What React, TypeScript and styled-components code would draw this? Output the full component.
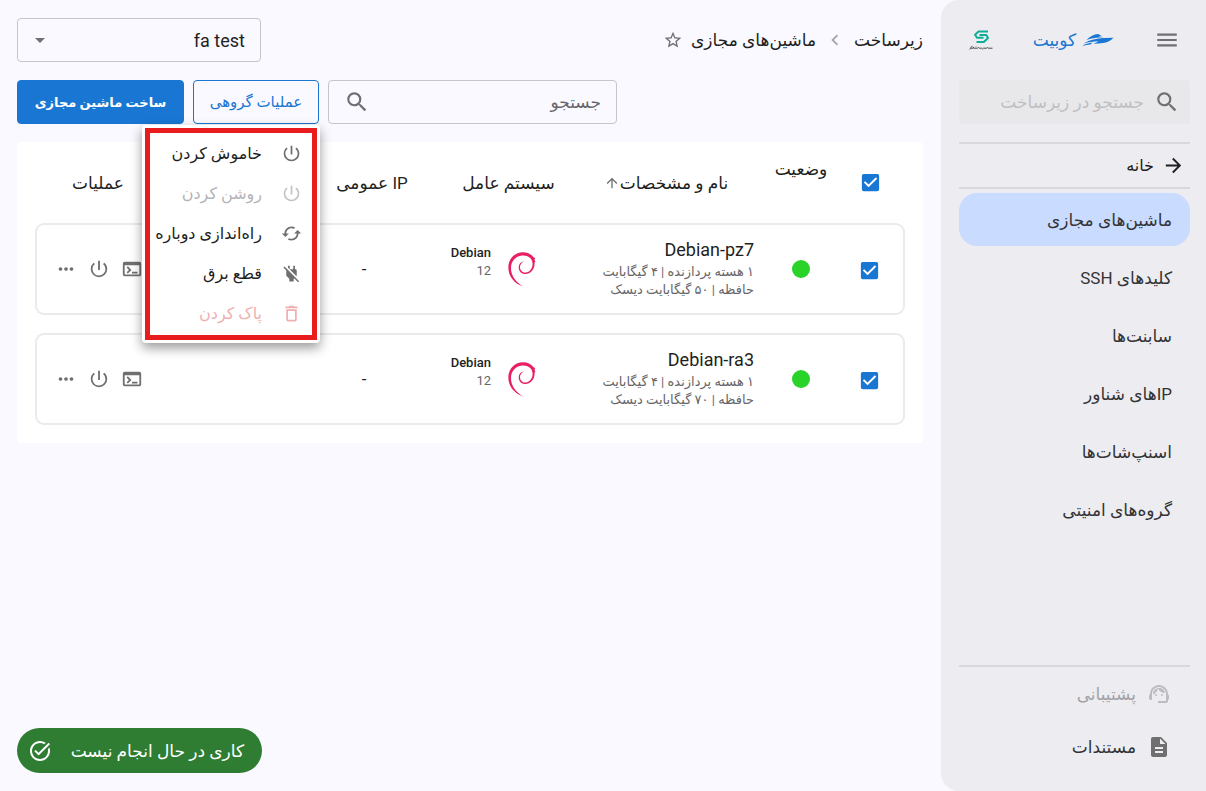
import React, { useState } from "react";
import styled, { createGlobalStyle, css } from "styled-components";
import {
  MdArrowDropDown,
  MdArrowForward,
  MdArrowUpward,
  MdCached,
  MdCheckBox,
  MdCheckBoxOutlineBlank,
  MdChevronLeft,
  MdDescription,
  MdMenu,
  MdMoreHoriz,
  MdOutlineDeleteOutline,
  MdOutlineTerminal,
  MdPowerOff,
  MdPowerSettingsNew,
  MdSearch,
  MdStarBorder,
  MdSupportAgent,
  MdTaskAlt,
} from "react-icons/md";

const fontStack = `Roboto, "DejaVu Sans", sans-serif`;

const colors = {
  page: "#faf9ff",
  side: "#edecf1",
  line: "#d9d9dd",
  text: "#1f1f22",
  soft: "#666669",
  icon: "#6f6f72",
  faded: "#b4b4b8",
  blue: "#1976d2",
  active: "#c9dbff",
};

const GlobalStyle = createGlobalStyle`
  *, *::before, *::after { box-sizing: border-box; }
  body { margin: 0; background: ${colors.page}; color: ${colors.text}; font-family: ${fontStack}; font-size: 17px; line-height: 24px; }
  button, input, select { font-family: inherit; color: inherit; }
  svg { display: block; flex: none; }
`;

const Page = styled.div`
  display: flex;
  min-height: 100vh;
`;

/* Sidebar */
const Sidebar = styled.aside`
  flex: none;
  width: 265px;
  display: flex;
  flex-direction: column;
  padding: 18px 16px 18px 18px;
  background: ${colors.side};
  border-radius: 18px 0 0 18px;
`;

const SideHeader = styled.div`
  display: flex;
  align-items: center;
  justify-content: space-between;
  height: 44px;
  padding: 0 10px;
  margin-bottom: 18px;
`;

const IconButton = styled.button`
  display: grid;
  place-items: center;
  padding: 0;
  border: 0;
  background: none;
  color: ${colors.icon};
  cursor: pointer;
`;

const Brand = styled.a`
  display: flex;
  align-items: center;
  gap: 6px;
  color: ${colors.blue};
  text-decoration: none;
`;

const SideSearch = styled.label`
  display: flex;
  align-items: center;
  gap: 10px;
  height: 44px;
  padding: 0 10px;
  margin-bottom: 18px;
  border-radius: 4px;
  background: #e8e8ea;
  color: ${colors.icon};
`;

const PlainInput = styled.input<{ $faint?: boolean }>`
  flex: 1;
  width: 100%;
  min-width: 0;
  padding: 0;
  border: 0;
  outline: 0;
  background: none;
  font-size: 17px;
  &::placeholder {
    color: ${(p) => (p.$faint ? "#bfbfc2" : colors.soft)};
    opacity: 1;
  }
`;

const HomeLink = styled.a`
  display: flex;
  align-items: center;
  gap: 8px;
  height: 47px;
  padding: 0 5px;
  margin-bottom: 4px;
  border: solid ${colors.line};
  border-width: 2px 0;
  color: ${colors.text};
  font-size: 16px;
  text-decoration: none;
`;

const Nav = styled.nav`
  display: flex;
  flex-direction: column;
  gap: 5px;
`;

const NavLink = styled.a<{ $active?: boolean }>`
  display: flex;
  align-items: center;
  height: 53px;
  padding: 0 18px;
  border-radius: 18px;
  background: ${(p) => (p.$active ? colors.active : "transparent")};
  color: #343437;
  text-decoration: none;
`;

const SideFooter = styled.div`
  display: flex;
  flex-direction: column;
  margin-top: auto;
  border-top: 2px solid ${colors.line};
`;

const FooterLink = styled.a<{ $disabled?: boolean }>`
  display: flex;
  align-items: center;
  gap: 11px;
  height: 53px;
  padding: 0 19px;
  color: ${(p) => (p.$disabled ? "#a2a2a6" : "#343437")};
  text-decoration: none;
  svg {
    color: ${(p) => (p.$disabled ? "#bcbcc0" : colors.icon)};
  }
`;

/* Main */
const Main = styled.main`
  flex: 1;
  min-width: 0;
  display: flex;
  flex-direction: column;
  padding: 18px 18px 18px 17px;
`;

const Bar = styled.div`
  display: flex;
  align-items: center;
  justify-content: space-between;
  height: 44px;
  margin-bottom: 18px;
`;

const Crumbs = styled.nav`
  display: flex;
  align-items: center;
  gap: 8px;
  a {
    color: inherit;
    text-decoration: none;
  }
`;

const SelectBox = styled.div`
  display: grid;
  align-items: center;
  width: 244px;
  color: ${colors.icon};
  > * {
    grid-area: 1 / 1;
  }
  > svg {
    justify-self: end;
    margin-left: 11px;
    pointer-events: none;
  }
`;

const Select = styled.select`
  appearance: none;
  width: 100%;
  height: 44px;
  padding: 0 15px;
  border: 1px solid #c6c6ca;
  border-radius: 4px;
  background: none;
  color: ${colors.text};
  font-size: 18px;
  direction: rtl;
`;

const Tools = styled.div`
  display: flex;
  justify-content: flex-end;
  gap: 9px;
  margin-bottom: 18px;
`;

const SearchBox = styled.label`
  display: flex;
  align-items: center;
  width: 289px;
  height: 44px;
  padding: 0 15px;
  border: 1px solid #c6c6ca;
  border-radius: 4px;
  color: ${colors.icon};
`;

const Button = styled.button<{ $filled?: boolean }>`
  width: ${(p) => (p.$filled ? "167px" : "126px")};
  height: 44px;
  padding: 0;
  border: 1px solid ${colors.blue};
  border-radius: 4px;
  background: ${(p) => (p.$filled ? colors.blue : "transparent")};
  color: ${(p) => (p.$filled ? "#fff" : colors.blue)};
  font-size: ${(p) => (p.$filled ? "13px" : "15px")};
  font-weight: ${(p) => (p.$filled ? 700 : 400)};
  white-space: nowrap;
`;

const MenuAnchor = styled.div`
  position: relative;
`;

const Menu = styled.div`
  position: absolute;
  top: 45px;
  right: -1px;
  z-index: 1;
  width: 178px;
  padding: 3px;
  border-radius: 4px;
  background: #fff;
  box-shadow: 0 5px 12px rgba(0, 0, 0, 0.4);
`;

const MenuList = styled.div`
  display: flex;
  flex-direction: column;
  padding-bottom: 2px;
  border: 5px solid #e81c1c;
`;

const menuTone = {
  normal: css`
    color: ${colors.text};
    svg {
      color: ${colors.icon};
    }
  `,
  disabled: css`
    color: ${colors.faded};
    svg {
      color: #c4c4c6;
    }
  `,
  danger: css`
    color: #efb0b2;
  `,
};

const MenuItem = styled.button<{ $tone: keyof typeof menuTone }>`
  display: flex;
  align-items: center;
  gap: 19px;
  height: 40px;
  padding: 0 10px;
  border: 0;
  background: none;
  font-size: 16px;
  white-space: nowrap;
  ${(p) => menuTone[p.$tone]}
`;

/* Table */
const Panel = styled.section`
  padding: 0 18px;
  border-radius: 4px;
  background: #fff;
`;

const Table = styled.table`
  width: 100%;
  table-layout: fixed;
  border-collapse: separate;
  border-spacing: 0 18px;
`;

const Col = styled.col<{ $w?: number }>`
  width: ${(p) => (p.$w ? `${p.$w}px` : "auto")};
`;

const HeadCell = styled.th<{ $top?: boolean; $end?: boolean; $inset?: boolean }>`
  height: 45px;
  padding: 0;
  padding-left: ${(p) => (p.$end ? "37px" : "0")};
  padding-right: ${(p) => (p.$inset ? "13px" : "0")};
  font-weight: 400;
  line-height: 18px;
  text-align: ${(p) => (p.$end ? "left" : "center")};
  vertical-align: ${(p) => (p.$top ? "top" : "middle")};
  white-space: nowrap;
`;

const SortButton = styled.button`
  display: inline-flex;
  align-items: center;
  padding: 0;
  border: 0;
  background: none;
  font-size: 17px;
  svg {
    color: ${colors.icon};
  }
`;

const Cell = styled.td<{ $inset?: boolean }>`
  height: 92px;
  padding: 0;
  padding-right: ${(p) => (p.$inset ? "16px" : "0")};
  border: solid #ebebec;
  border-width: 2px 0;
  text-align: center;
  &:first-child {
    border-right-width: 2px;
    border-radius: 0 9px 9px 0;
  }
  &:last-child {
    border-left-width: 2px;
    border-radius: 9px 0 0 9px;
  }
`;

const CheckLabel = styled.label`
  display: inline-grid;
  vertical-align: middle;
  color: ${colors.blue};
  > * {
    grid-area: 1 / 1;
  }
`;

const CheckInput = styled.input`
  appearance: none;
  margin: 0;
`;

const StatusDot = styled.span`
  display: block;
  width: 18px;
  height: 18px;
  margin: 0 auto;
  border-radius: 50%;
  background: #29d329;
`;

const NameBlock = styled.div`
  padding: 0 13px 4px 0;
  text-align: right;
  font-size: 13px;
  line-height: 18px;
  color: ${colors.soft};
  white-space: nowrap;
`;

const MachineName = styled.div`
  font-size: 18px;
  line-height: 27px;
  color: ${colors.text};
`;

const OsBlock = styled.div`
  display: flex;
  align-items: center;
  gap: 17px;
  padding-right: 42px;
`;

const OsText = styled.div`
  padding-bottom: 14px;
  font-size: 13px;
  line-height: 18px;
  text-align: right;
  color: ${colors.soft};
  strong {
    display: block;
    font-weight: 500;
    color: ${colors.text};
  }
`;

const Actions = styled.div`
  display: flex;
  justify-content: flex-end;
  gap: 11px;
  padding-left: 18px;
`;

const Status = styled.div`
  display: flex;
  align-items: center;
  align-self: flex-end;
  justify-content: space-between;
  width: 245px;
  height: 45px;
  padding: 0 18px 0 11px;
  margin-top: auto;
  border-radius: 23px;
  background: #2e7d32;
  color: #fff;
`;

function ShipLogo() {
  return (
    <svg width="32" height="14" viewBox="0 0 32 14" fill={colors.blue} aria-hidden="true">
      <path d="M4.500 7C8 3.500 12 1 16 1l3.500 1.800-3 .5 5 .9C15.500 4.200 9.500 5 4.500 7z" />
      <path d="M1.500 10.500C8 6.500 15 5.600 22 5l9.500-.3c-3 3.300-7.500 5.300-12.500 5.600-3 .2-5 .3-7.500.6l5-2.600c-5.500.4-10 .8-15 2.200z" />
      <path d="M.5 13c1-1.200 3-2.200 10-3.500L8.500 11.500C5.500 11.900 3 12.200.5 13z" />
    </svg>
  );
}

function CompanyLogo() {
  return (
    <svg width="24" height="20" viewBox="0 0 24 20" fill="none" aria-hidden="true">
      <g stroke="#10ad98" strokeWidth="2" strokeLinejoin="round">
        <path d="M19 1.500H9.500L6 4.800 8 7.800h6.500" />
        <path d="M10.500 5h6.800L19 8l-4.200 4H7.500" />
      </g>
      <path
        d="M23.500 18.200h-4l-1-.6-1 .6h-3l-1 .8-1-.8h-2l-1-.7-1 .7H5M4.500 17v1.200H1.500L.7 19.500M3.500 16.200l-2 1.300M7 16.500v.5"
        stroke="#4a4a4c"
      />
    </svg>
  );
}

function DebianLogo() {
  return (
    <svg width="28" height="35" viewBox="0 0 28 35" fill="#e91e63" aria-hidden="true">
      <path d="M15.500 34.500C6 31.500 0 24 .4 14.500.8 6 7.500.2 15 .3c4.500.1 8 1.700 10.300 4.700l1.900 1.200-.7 1.600.8 1.700-.8 1.500c.6 5.500-3.800 11-9 11-4 0-6.800-3-6.800-6.600 0-3.200 2-5.600 5.600-6.200-2.700 1.300-4.300 3.300-4.300 6 .1 3.200 2.600 5.500 5.800 5.300 4.200-.3 7.300-5 6.700-9.800C24 6 19.500 3 14 3.600 7.500 4.300 3 9.300 3 16c0 8 5 14.500 12.500 18.500z" />
    </svg>
  );
}

function Check({ label, checked, onChange }: { label: string; checked: boolean; onChange: () => void }) {
  return (
    <CheckLabel>
      <CheckInput type="checkbox" aria-label={label} checked={checked} onChange={onChange} />
      {checked ? <MdCheckBox size={23} /> : <MdCheckBoxOutlineBlank size={23} />}
    </CheckLabel>
  );
}

const navItems = ["ماشین‌های مجازی", "کلیدهای SSH", "سابنت‌ها", "IPهای شناور", "اسنپ‌شات‌ها", "گروه‌های امنیتی"];

const menuItems = [
  { label: "خاموش کردن", Icon: MdPowerSettingsNew, tone: "normal" },
  { label: "روشن کردن", Icon: MdPowerSettingsNew, tone: "disabled" },
  { label: "راه‌اندازی دوباره", Icon: MdCached, tone: "normal" },
  { label: "قطع برق", Icon: MdPowerOff, tone: "normal" },
  { label: "پاک کردن", Icon: MdOutlineDeleteOutline, tone: "danger" },
] as const;

const machines = [
  { name: "Debian-pz7", cpu: "۱ هسته پردازنده | ۴ گیگابایت", disk: "حافظه | ۵۰ گیگابایت دیسک" },
  { name: "Debian-ra3", cpu: "۱ هسته پردازنده | ۴ گیگابایت", disk: "حافظه | ۷۰ گیگابایت دیسک" },
];

export default function App() {
  const [selected, setSelected] = useState(machines.map((m) => m.name));
  const [menuOpen, setMenuOpen] = useState(true);
  const all = selected.length === machines.length;

  const toggle = (name: string) =>
    setSelected((s) => (s.includes(name) ? s.filter((n) => n !== name) : [...s, name]));

  return (
    <>
      <GlobalStyle />
      <Page dir="rtl" lang="fa">
        <Sidebar>
          <SideHeader>
            <IconButton aria-label="منو"><MdMenu size={26} /></IconButton>
            <Brand href="#"><ShipLogo />کوبیت</Brand>
            <CompanyLogo />
          </SideHeader>
          <SideSearch>
            <MdSearch size={26} />
            <PlainInput $faint aria-label="جستجو در زیرساخت" placeholder="جستجو در زیرساخت" />
          </SideSearch>
          <HomeLink href="#"><MdArrowForward size={23} />خانه</HomeLink>
          <Nav>
            {navItems.map((item, i) => (
              <NavLink key={item} href="#" $active={i === 0}>{item}</NavLink>
            ))}
          </Nav>
          <SideFooter>
            <FooterLink href="#" $disabled><MdSupportAgent size={24} />پشتیبانی</FooterLink>
            <FooterLink href="#"><MdDescription size={24} />مستندات</FooterLink>
          </SideFooter>
        </Sidebar>

        <Main>
          <Bar>
            <Crumbs>
              <a href="#">زیرساخت</a>
              <MdChevronLeft size={22} color="#a5a5a9" />
              <a href="#">ماشین‌های مجازی</a>
              <IconButton aria-label="نشان کردن"><MdStarBorder size={20} /></IconButton>
            </Crumbs>
            <SelectBox>
              <Select aria-label="پروژه"><option>fa test</option></Select>
              <MdArrowDropDown size={24} />
            </SelectBox>
          </Bar>

          <Tools>
            <SearchBox>
              <PlainInput aria-label="جستجو" placeholder="جستجو" />
              <MdSearch size={26} />
            </SearchBox>
            <MenuAnchor>
              <Button aria-expanded={menuOpen} onClick={() => setMenuOpen(!menuOpen)}>عملیات گروهی</Button>
              {menuOpen && (
                <Menu>
                  <MenuList role="menu">
                    {menuItems.map(({ label, Icon, tone }) => (
                      <MenuItem key={label} role="menuitem" $tone={tone}><Icon size={21} />{label}</MenuItem>
                    ))}
                  </MenuList>
                </Menu>
              )}
            </MenuAnchor>
            <Button $filled>ساخت ماشین مجازی</Button>
          </Tools>

          <Panel>
            <Table>
              <colgroup>
                <Col $w={70} />
                <Col $w={68} />
                <Col $w={189} />
                <Col $w={139} />
                <Col $w={134} />
                <Col />
              </colgroup>
              <thead>
                <tr>
                  <HeadCell>
                    <Check label="انتخاب همه" checked={all} onChange={() => setSelected(all ? [] : machines.map((m) => m.name))} />
                  </HeadCell>
                  <HeadCell $top>وضعیت</HeadCell>
                  <HeadCell $inset><SortButton>نام و مشخصات<MdArrowUpward size={16} /></SortButton></HeadCell>
                  <HeadCell>سیستم عامل</HeadCell>
                  <HeadCell>IP عمومی</HeadCell>
                  <HeadCell $end>عملیات</HeadCell>
                </tr>
              </thead>
              <tbody>
                {machines.map((m) => (
                  <tr key={m.name}>
                    <Cell><Check label={m.name} checked={selected.includes(m.name)} onChange={() => toggle(m.name)} /></Cell>
                    <Cell><StatusDot role="img" aria-label="روشن" /></Cell>
                    <Cell>
                      <NameBlock>
                        <MachineName>{m.name}</MachineName>
                        <div>{m.cpu}</div>
                        <div>{m.disk}</div>
                      </NameBlock>
                    </Cell>
                    <Cell>
                      <OsBlock>
                        <DebianLogo />
                        <OsText><strong>Debian</strong>12</OsText>
                      </OsBlock>
                    </Cell>
                    <Cell $inset>-</Cell>
                    <Cell>
                      <Actions>
                        <IconButton aria-label="کنسول"><MdOutlineTerminal size={22} /></IconButton>
                        <IconButton aria-label="روشن یا خاموش"><MdPowerSettingsNew size={22} /></IconButton>
                        <IconButton aria-label="بیشتر"><MdMoreHoriz size={22} /></IconButton>
                      </Actions>
                    </Cell>
                  </tr>
                ))}
              </tbody>
            </Table>
          </Panel>

          <Status role="status">
            <span>کاری در حال انجام نیست</span>
            <MdTaskAlt size={24} />
          </Status>
        </Main>
      </Page>
    </>
  );
}
